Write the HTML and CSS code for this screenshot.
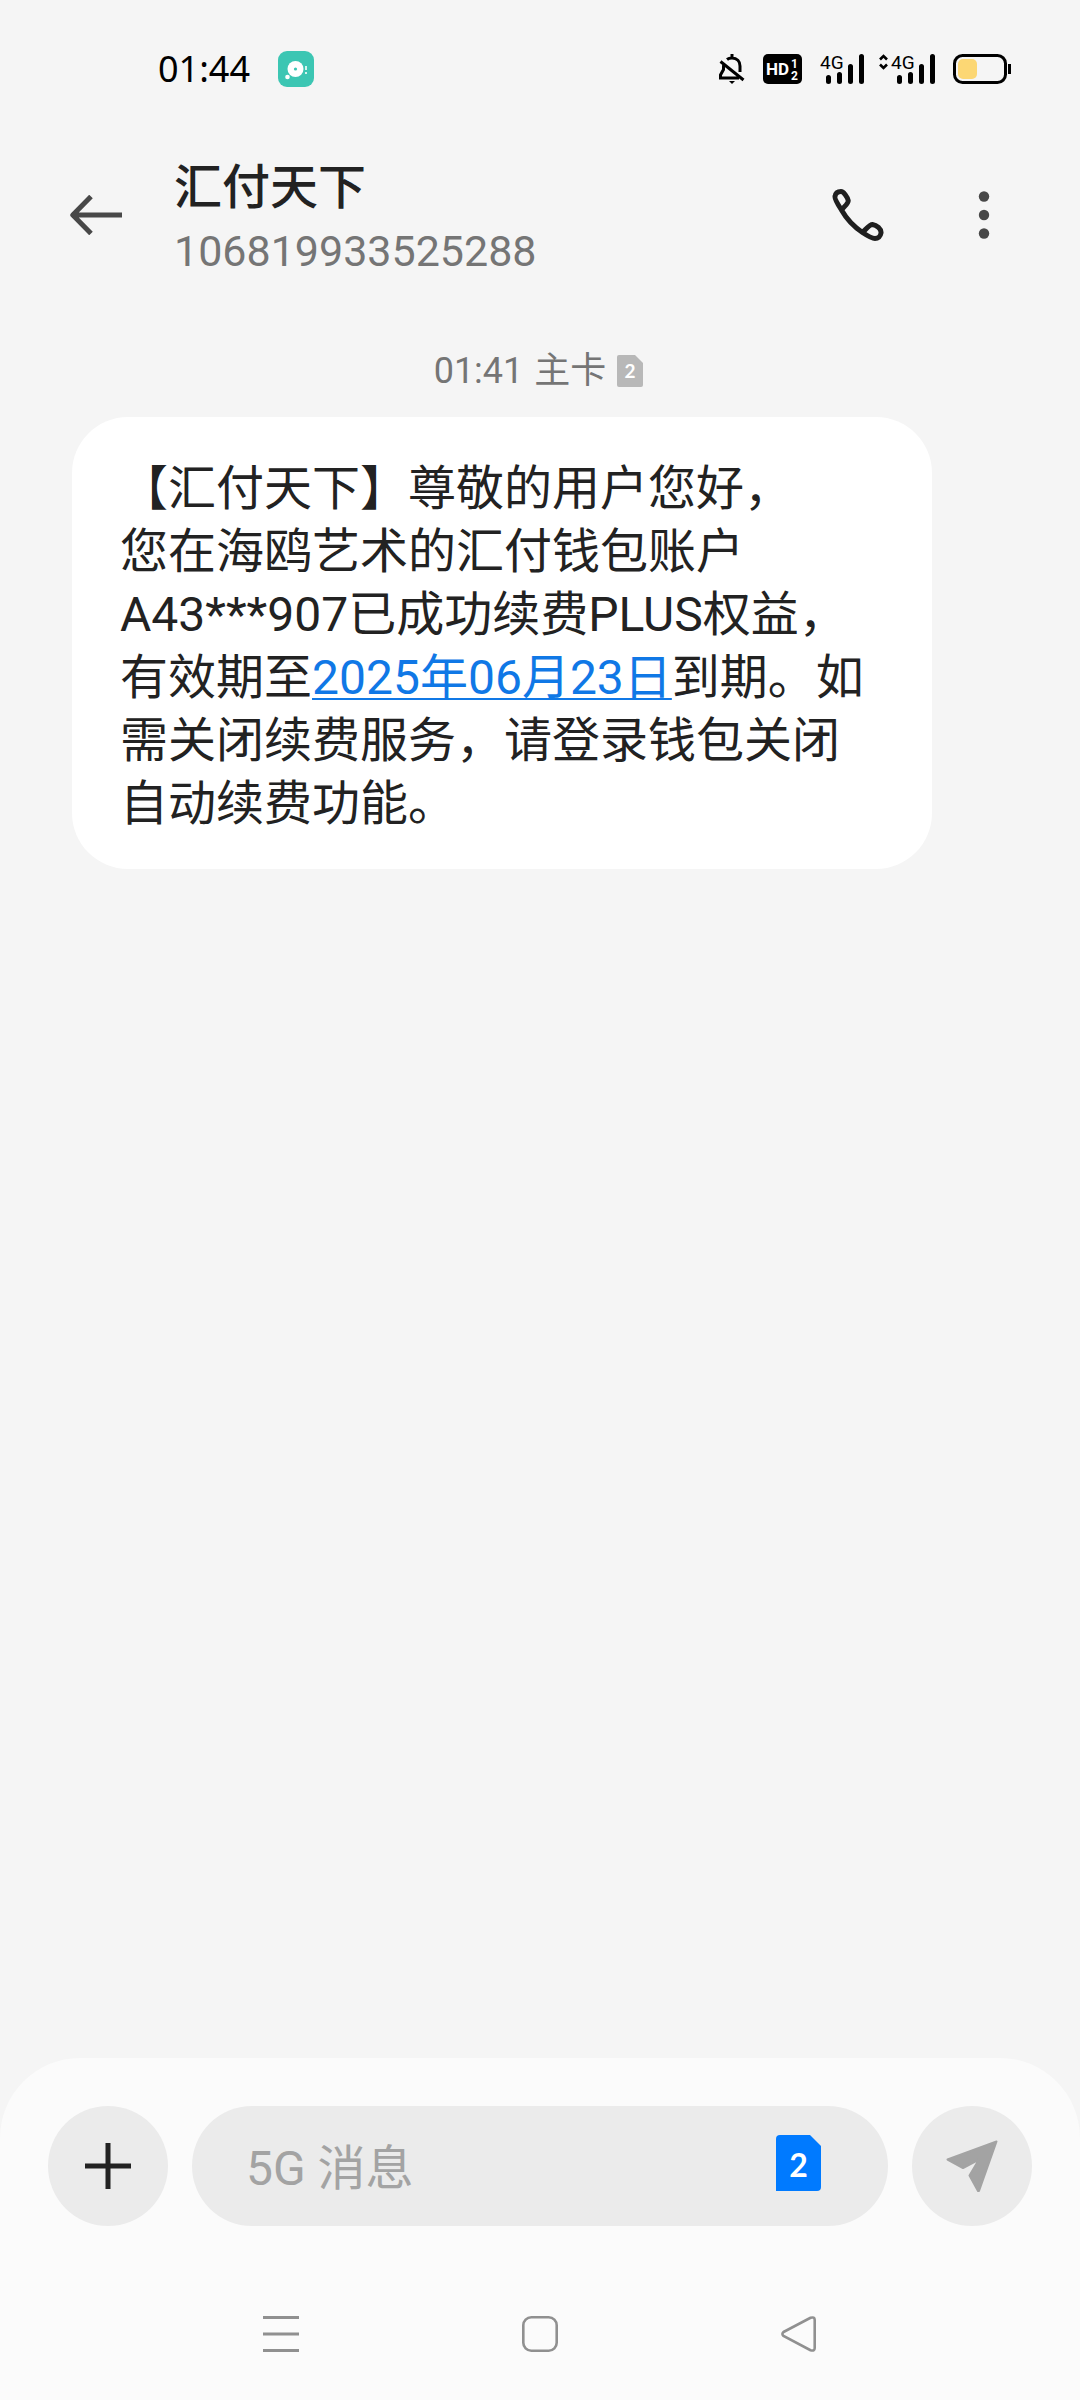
FILE: index.html
```html
<!DOCTYPE html>
<html lang="zh-CN">
<head>
<meta charset="utf-8">
<meta name="viewport" content="width=device-width, initial-scale=1">
<title>汇付天下</title>
<link rel="stylesheet" href="styles.css">
</head>
<body>
<div class="status-bar">
  <div class="status-left">
    <time class="clock">01:44</time>
    <svg class="app-icon" width="36" height="36" viewBox="0 0 36 36" aria-hidden="true">
      <rect width="36" height="36" rx="9" fill="#3cc6b3"/>
      <circle cx="17.500" cy="18" r="8" fill="#fff"/>
      <circle cx="17.500" cy="18" r="1.600" fill="#3cc6b3"/>
      <circle cx="9.500" cy="26" r="2.300" fill="#fff"/>
      <path d="M28 15v4M28 21v2" stroke="#d5f3ee" stroke-width="2" fill="none"/>
    </svg>
  </div>
  <div class="status-right">
    <svg width="26" height="30" viewBox="0 0 26 30" fill="none" stroke="#000" stroke-width="3" aria-hidden="true">
      <path d="M13 0v4M8 5.500c1.500-1.200 3-1.500 5-1.500 5 0 8 3.500 8 8v6M4.800 10.500c-.5 1-.3 3-.3 5L1.500 21v3H20M1.500 7.500l23 18.500"/>
      <path d="M10 27h6l-3 3z" fill="#000" stroke="none"/>
    </svg>
    <svg class="hd" width="39" height="30" viewBox="0 0 39 30" aria-label="HD">
      <rect width="39" height="30" rx="5" fill="#000"/>
      <text x="3" y="21" font-size="17">HD</text>
      <text x="28" y="14" font-size="12">1</text>
      <text x="28" y="26" font-size="12">2</text>
    </svg>
    <svg class="net" width="44" height="42" viewBox="0 -6 44 42" aria-label="4G">
      <text x="0" y="15" font-size="19">4G</text>
      <path d="M8.500 23.500v4M19.500 20.500v7M30.500 12.500v15M41.500 2.500v25" stroke="#000" stroke-width="5" stroke-linecap="round"/>
    </svg>
    <svg class="net net-data" width="56" height="42" viewBox="0 -6 56 42" aria-label="4G">
      <path d="M1 5.500l3.500-3.500L8 5.500M1 10.500l3.500 3.500L8 10.500" fill="none" stroke="#000" stroke-width="2.600"/>
      <text x="12" y="15" font-size="19">4G</text>
      <path d="M20.500 23.500v4M31.500 20.500v7M42.500 12.500v15M53.500 2.500v25" stroke="#000" stroke-width="5" stroke-linecap="round"/>
    </svg>
    <svg class="battery" width="58" height="30" viewBox="0 0 58 30" aria-hidden="true">
      <rect x="1.500" y="1.500" width="51" height="27" rx="8" fill="none" stroke="#000" stroke-width="3"/>
      <rect x="5" y="5" width="19" height="20" rx="5" fill="#fcd774"/>
      <path d="M56.500 10v10" stroke="#000" stroke-width="3"/>
    </svg>
  </div>
</div>

<header class="header">
  <button class="icon-btn" type="button" aria-label="返回">
    <svg width="52" height="40" viewBox="0 0 52 40" fill="none" stroke="#484848" stroke-width="5">
      <path d="M52 20H4M21 1.500L2.800 20 21 38.500" stroke-linejoin="round"/>
    </svg>
  </button>
  <div class="contact">
    <h1 class="contact-name">汇付天下</h1>
    <p class="contact-number">106819933525288</p>
  </div>
  <button class="icon-btn" type="button" aria-label="拨打电话">
    <svg width="52" height="52" viewBox="0 0 52 52" fill="none" stroke="#1f1f1f" stroke-width="5" stroke-linejoin="round">
      <path d="M9.500 21C5 14 2.500 9 3 7.500 3.500 4 6 2.500 9 2.500 11.500 2.500 15.500 8 16.200 11.500 16.600 14.500 12.500 17 9.500 21 14 29 21 37 30.500 43.500 34 40.500 37 35.500 40.500 35.500 44.500 36 49.500 40 49 44 48.500 47.500 46 49.500 43 49.500 39.500 49.500 35 46.500 30.500 43.500"/>
    </svg>
  </button>
  <button class="icon-btn more" type="button" aria-label="更多">
    <svg width="12" height="48" viewBox="0 0 12 48" fill="#484848">
      <circle cx="6" cy="5.500" r="5.200"/><circle cx="6" cy="24" r="5.200"/><circle cx="6" cy="42.500" r="5.200"/>
    </svg>
  </button>
</header>

<main class="thread">
  <div class="stamp">
    <time>01:41</time>
    <span>主卡</span>
    <svg class="sim" width="26" height="32" viewBox="0 0 26 32" aria-label="卡 2">
      <path d="M2 0H18L26 8V30a2 2 0 0 1-2 2H2a2 2 0 0 1-2-2V2a2 2 0 0 1 2-2z" fill="#b8b8b8"/>
      <text x="13" y="23" font-size="19">2</text>
    </svg>
  </div>
  <p class="bubble">【汇付天下】尊敬的用户您好&#xFF0C;<br>您在海鸥艺术的汇付钱包账户A43***907已成功续费PLUS权益&#xFF0C;有效期至<a href="#">2025年06月23日</a>到期。如需关闭续费服务&#xFF0C;请登录钱包关闭自动续费功能。</p>
</main>

<footer class="dock">
  <form class="composer">
    <button class="round-btn" type="button" aria-label="添加">
      <svg width="46" height="46" viewBox="0 0 46 46" stroke="#222" stroke-width="5"><path d="M23 0v46M0 23h46"/></svg>
    </button>
    <div class="field">
      <input class="field-input" type="text" placeholder="5G 消息" aria-label="5G 消息">
      <button class="sim-btn" type="button" aria-label="切换到卡 2">
        <svg class="sim" width="45" height="56" viewBox="0 0 45 56">
          <path d="M4 0H34L45 11V52a4 4 0 0 1-4 4H0V4a4 4 0 0 1 4-4z" fill="#007aff"/>
          <text x="22.500" y="42" font-size="32">2</text>
        </svg>
      </button>
    </div>
    <button class="round-btn" type="submit" aria-label="发送">
      <svg width="52" height="52" viewBox="0 0 52 52" fill="#a3a3a3" stroke="#a3a3a3" stroke-width="2" stroke-linejoin="round">
        <path d="M1.500 19.500L50.500 1.500 33 51H32L23.500 35.500 33 19.500 17 28z"/>
      </svg>
    </button>
  </form>
  <nav class="nav">
    <button class="icon-btn" type="button" aria-label="最近任务">
      <svg width="36" height="36" viewBox="0 0 36 36" stroke="#909090" stroke-width="3"><path d="M0 1.500h36M0 18h36M0 34.500h36"/></svg>
    </button>
    <button class="icon-btn" type="button" aria-label="主屏幕">
      <svg width="36" height="36" viewBox="0 0 36 36" fill="none" stroke="#909090" stroke-width="2.600"><rect x="1.300" y="1.300" width="33.400" height="33.400" rx="8"/></svg>
    </button>
    <button class="icon-btn" type="button" aria-label="返回上一页">
      <svg width="36" height="36" viewBox="0 0 36 36" fill="none" stroke="#909090" stroke-width="2.600"><path d="M2.500 16L29.500 1.800Q33.700.5 33.700 4V32Q33.700 35.500 29.500 34.200L2.500 20Q.3 18 2.500 16z"/></svg>
    </button>
  </nav>
</footer>
</body>
</html>
```
FILE: styles.css
```css
* { box-sizing: border-box; }

body {
  margin: 0;
  min-height: 100vh;
  display: flex;
  flex-direction: column;
  background: #f5f5f5;
  color: #222;
  font-family: Roboto, "Noto Sans CJK SC", sans-serif;
}

h1, p { margin: 0; }
svg { display: block; flex: none; }

button {
  margin: 0;
  padding: 0;
  border: 0;
  background: none;
  cursor: pointer;
}

.status-bar {
  display: flex;
  justify-content: space-between;
  align-items: center;
  height: 138px;
  padding: 0 69px 0 158px;
}

.status-left { display: flex; align-items: center; gap: 28px; }

.clock {
  color: #000;
  font-family: "Noto Sans", sans-serif;
  font-size: 36px;
  line-height: 48px;
}

.status-right { display: flex; align-items: center; gap: 18px; }
.net-data { margin-left: -3px; }

.hd text {
  fill: #fff;
  font-family: Roboto, sans-serif;
  font-weight: 700;
}

.net text {
  fill: #000;
  font-family: Roboto, sans-serif;
  font-weight: 400;
}

.header {
  display: flex;
  align-items: center;
  height: 154px;
  padding: 0 70px;
}

.icon-btn {
  display: flex;
  align-items: center;
  justify-content: center;
  min-width: 52px;
  height: 72px;
}

.contact { flex: 1; padding: 6px 0 0 52px; }

.contact-name {
  font-size: 48px;
  font-weight: 500;
  line-height: 66px;
}

.contact-number {
  color: #757575;
  font-size: 43px;
  line-height: 60px;
}

.more { margin-left: 74px; }

.thread { flex: 1; padding: 53px 72px 48px; }

.stamp {
  display: flex;
  align-items: center;
  justify-content: center;
  gap: 11px;
  margin-bottom: 20px;
  padding-right: 3px;
  color: #757575;
  font-size: 36px;
  line-height: 52px;
}

.sim text {
  fill: #fff;
  font-family: Lato, sans-serif;
  font-weight: 700;
  text-anchor: middle;
}

.bubble {
  width: fit-content;
  max-width: 860px;
  padding: 40px 48px 34px;
  border-radius: 56px;
  background: #fff;
  font-size: 48px;
  line-height: 63px;
}

.bubble a {
  color: #1078e6;
  text-decoration-thickness: 2px;
  text-underline-offset: 4px;
  text-decoration-skip-ink: none;
}

.dock {
  border-radius: 80px 80px 0 0;
  background: #fbfbfb;
}

.composer {
  display: flex;
  align-items: center;
  gap: 24px;
  padding: 48px 48px 42px;
}

.round-btn {
  display: flex;
  flex: none;
  align-items: center;
  justify-content: center;
  width: 120px;
  height: 120px;
  border-radius: 50%;
  background: #ebebeb;
}

.field {
  display: flex;
  flex: 1;
  align-items: center;
  min-width: 0;
  height: 120px;
  padding: 0 67px 0 54px;
  border-radius: 60px;
  background: #ebebeb;
}

.field-input {
  flex: 1;
  min-width: 0;
  padding: 6px 0 0;
  border: 0;
  outline: 0;
  background: none;
  color: #222;
  font: inherit;
  font-size: 48px;
  line-height: 72px;
}

.field-input::placeholder { color: #a3a3a3; opacity: 1; }

.sim-btn { padding-bottom: 6px; }

.nav {
  display: flex;
  align-items: center;
  justify-content: space-evenly;
  height: 132px;
  padding: 0 48px;
}
```
